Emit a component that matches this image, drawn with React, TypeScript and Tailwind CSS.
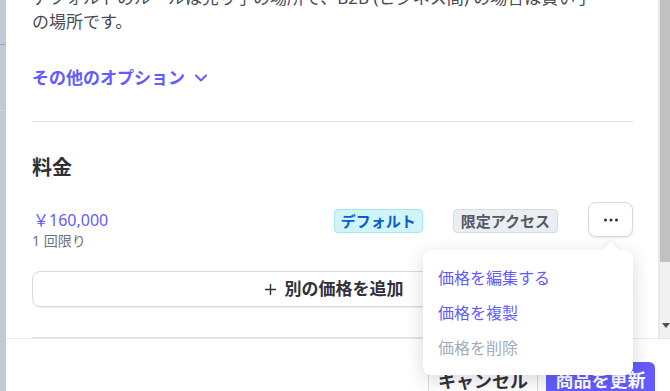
import { ChevronDown, Plus } from 'lucide-react';

const font = "font-['Noto_Sans','Noto_Sans_CJK_JP',sans-serif]";

function Dots() {
  return (
    <svg width="18" height="6" viewBox="0 0 18 6" className="text-[#2c2f36]">
      <circle cx="3.5" cy="3" r="1.5" fill="currentColor" />
      <circle cx="9" cy="3" r="1.5" fill="currentColor" />
      <circle cx="14.5" cy="3" r="1.5" fill="currentColor" />
    </svg>
  );
}

function PriceMenu() {
  return (
    <div className="absolute left-[423px] top-[250px] w-[210px] rounded-lg bg-white py-[10px] shadow-[0_5px_18px_rgba(40,45,60,0.18)] z-10">
      <div className="absolute -top-[6px] right-[16px] h-3 w-3 rotate-45 bg-white shadow-[-2px_-2px_4px_rgba(40,45,60,0.06)]" />
      <div className="flex h-[35px] items-center px-[15px] text-[16px] text-[#635bff]">価格を編集する</div>
      <div className="flex h-[35px] items-center px-[15px] text-[16px] text-[#635bff]">価格を複製</div>
      <div className="flex h-[35px] items-center px-[15px] text-[16px] text-[#a3acb9]">価格を削除</div>
    </div>
  );
}

export default function App() {
  return (
    <div className={`relative flex h-[391px] w-[670px] overflow-hidden bg-white ${font}`}>
      {/* backdrop edge */}
      <div className="flex w-[6px] shrink-0 flex-col bg-[#c3c8d2]">
        <div className="mt-[44px] h-px bg-[#9a9edb]" />
        <div className="mt-[65px] h-px bg-[#cfd3db]" />
      </div>

      <div className="flex min-w-0 flex-1 flex-col">
        <div className="flex h-[338px] shrink-0">
          <div className="flex min-w-0 flex-1 flex-col overflow-hidden pl-[26px] pr-[25px]">
            <p className="-mt-[14px] whitespace-nowrap text-[17px] leading-[24px] text-[#474b55]">
              デフォルトのルールは売り手の場所で、B2B (ビジネス間) の場合は買い手
              <br />
              の場所です。
            </p>

            <button className="mt-[32px] flex items-center gap-[6px] self-start text-[17px] font-bold leading-[24px] text-[#635bff]">
              その他のオプション
              <ChevronDown size={20} strokeWidth={2.4} />
            </button>

            <div className="mt-[31px] h-px shrink-0 bg-[#dfe3e8]" />

            <h3 className="mt-[32px] text-[20px] font-bold leading-[28px] text-[#2e3038]">料金</h3>

            <div className="mt-[20px] flex items-start justify-between">
              <div className="flex flex-col pt-[7px]">
                <span className="pl-px text-[16px] leading-[22px] text-[#635bff]">￥160,000</span>
                <span className="text-[14px] leading-[20px] text-[#687385]">1 回限り</span>
              </div>
              <div className="flex items-start gap-[30px]">
                <span className="mt-[7px] flex h-[24px] items-center rounded-[4px] border border-[#a4e6f1] bg-[#cff5f6] px-[6px] text-[15px] font-bold text-[#0a5ccf]">
                  デフォルト
                </span>
                <span className="mt-[7px] flex h-[24px] items-center rounded-[4px] border border-[#d5dbe1] bg-[#ebeef1] px-[7px] text-[15px] font-bold text-[#545969]">
                  限定アクセス
                </span>
                <button className="flex h-[35px] w-[45px] items-center justify-center rounded-lg border border-[#d5dbe1] bg-white shadow-[0_1px_2px_rgba(40,45,60,0.12)]">
                  <Dots />
                </button>
              </div>
            </div>

            <button className="mt-[20px] flex h-[36px] shrink-0 items-center justify-center gap-[6px] rounded-lg border border-[#d5dbe1] bg-white text-[17px] font-bold text-[#30313d] shadow-[0_1px_1px_rgba(40,45,60,0.08)]">
              <Plus size={17} strokeWidth={2} />
              別の価格を追加
            </button>

            <div className="mt-[30px] h-[2px] shrink-0 bg-[#dfe3e8]" />
          </div>

          {/* scrollbar */}
          <div className="flex w-[12px] shrink-0 flex-col border-l-2 border-[#e9e9e9] bg-[#f1f1f1]">
            <div className="h-[262px] bg-[#c1c1c1]" />
            <div className="flex flex-1 items-end justify-end pb-[10px]">
              <div className="h-0 w-0 border-l-[4px] border-r-[4px] border-t-[5px] border-l-transparent border-r-transparent border-t-[#505050]" />
            </div>
          </div>
        </div>

        <div className="flex flex-1 justify-end gap-[8px] border-t border-[#e3e8ee] bg-white pr-[15px] pt-[23px]">
          <button className="flex h-[36px] w-[110px] items-start justify-center rounded-md border border-[#d5dbe1] bg-white pt-[5px] text-[18px] font-bold text-[#30313d]">
            キャンセル
          </button>
          <button className="flex h-[36px] w-[109px] items-start justify-center rounded-md bg-[#635bff] pt-[5px] text-[18px] font-bold text-white">
            商品を更新
          </button>
        </div>
      </div>

      <PriceMenu />
    </div>
  );
}
